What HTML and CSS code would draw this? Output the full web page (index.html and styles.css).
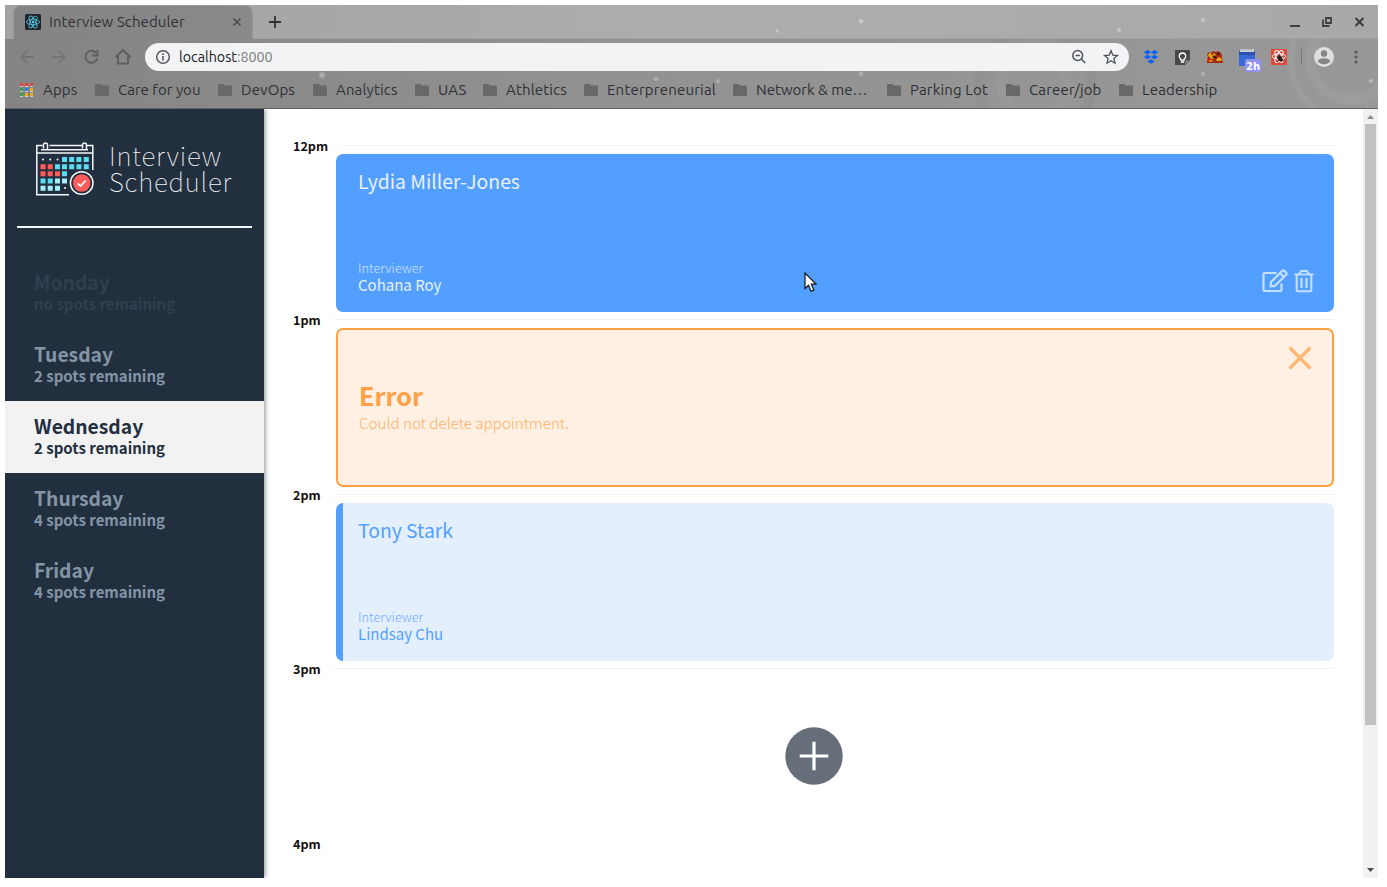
FILE: index.html
```html
<!DOCTYPE html>
<html lang="en">
<head>
<meta charset="utf-8">
<title>Interview Scheduler</title>
<link rel="stylesheet" href="styles.css">
</head>
<body>
<svg width="0" height="0" class="defs"><defs>
<symbol id="folder" viewBox="0 0 14 12"><path d="M1.3 0H5.5L7 1.6H12.7Q14 1.6 14 3V10.7Q14 12 12.7 12H1.3Q0 12 0 10.7V1.3Q0 0 1.3 0Z" fill="#686868"/></symbol>
</defs></svg>
<div class="window">
  <header class="chrome">
    <div class="tabstrip">
      <div class="tab">
        <svg class="favicon" width="16" height="16" viewBox="0 0 16 16"><rect width="16" height="16" rx="1.5" fill="#20232a"/><g fill="none" stroke="#4fb9d3" stroke-width=".9"><ellipse cx="8" cy="8" rx="6.6" ry="2.6"/><ellipse cx="8" cy="8" rx="6.6" ry="2.6" transform="rotate(60 8 8)"/><ellipse cx="8" cy="8" rx="6.6" ry="2.6" transform="rotate(120 8 8)"/></g><circle cx="8" cy="8" r="1.3" fill="#61dafb"/></svg>
        <span class="tab-title">Interview Scheduler</span>
        <svg class="tab-close" width="8" height="8" viewBox="0 0 8 8"><path d="M.5 .5L7.5 7.5M7.5 .5L.5 7.5" stroke="#4d4d4d" stroke-width="1.5"/></svg>
      </div>
      <svg class="new-tab" width="12" height="12" viewBox="0 0 12 12"><path d="M6 0V12M0 6H12" stroke="#333" stroke-width="1.8"/></svg>
      <svg class="win-controls" width="76" height="12" viewBox="0 0 76 12"><path d="M0 10H10" stroke="#3d4043" stroke-width="2"/><path d="M36 2H41V7H36ZM33 3.5V10H39.5" fill="none" stroke="#3d4043" stroke-width="1.8"/><path d="M65.5 2L73.5 10M73.5 2L65.5 10" stroke="#3d4043" stroke-width="2.2"/></svg>
    </div>
    <div class="toolbar">
      <svg class="nav" width="112" height="18" viewBox="0 0 112 18" fill="none" stroke="#747474" stroke-width="1.9"><path d="M14 9H1.5M7.5 2.7L1.3 9L7.5 15.3M32 9H44.7M38.5 2.7L44.7 9L38.5 15.3"/><g stroke="#5c5e61"><path d="M76 4.8A6 6 0 1 0 77.3 10.2M77.5 2V7.5H72"/><path d="M95.5 9.2L103 2L110.500 9.200M98 8V15.600H108V8"/></g></svg>
      <div class="address">
        <svg width="16" height="16" viewBox="0 0 16 16"><circle cx="8" cy="8" r="6.300" fill="none" stroke="#55595d" stroke-width="1.500"/><path d="M8 7V11.500M8 4.300V6" stroke="#55595d" stroke-width="1.600"/></svg>
        <span class="url">localhost<span class="port">:8000</span></span>
        <svg class="address-actions" width="48" height="16" viewBox="0 0 48 16" fill="none" stroke="#4f5357" stroke-width="1.5"><circle cx="5.700" cy="6.500" r="4.900"/><path d="M9.200 10L13.200 14M3.500 6.500H7.900"/><path d="M39 1.800L40.800 6.100L45.500 6.500L41.900 9.600L43 14.200L39 11.700L35 14.200L36.100 9.600L32.500 6.500L37.200 6.100Z" stroke-width="1.300"/></svg>
      </div>
      <div class="extensions">
        <svg width="14" height="14" viewBox="0 0 14 14" fill="#0061ff"><path d="M3.500 0L7 2.200L3.500 4.400L0 2.200ZM10.500 0L14 2.200L10.500 4.400L7 2.200ZM3.500 4.800L7 7L3.500 9.200L0 7ZM10.500 4.800L14 7L10.500 9.200L7 7ZM7 9.300L10.500 11.600L7 13.800L3.500 11.600Z"/></svg>
        <svg width="15" height="15" viewBox="0 0 15 15"><path d="M0 0H15V10L10 15H0Z" fill="#484848"/><path d="M15 10H10V15Z" fill="#747474"/><path d="M6 9.300Q4.300 8 4.300 6.200A3.200 3.200 0 0 1 10.700 6.200Q10.700 8 9 9.300V10.200H6Z" fill="none" stroke="#fff" stroke-width="1.300"/><path d="M5.800 12H9.200" stroke="#fff" stroke-width="1.600"/></svg>
        <svg width="16" height="14" viewBox="0 0 16 14"><path d="M0 4L2 2L4 3L6 1L9 2L11 1L14 3L15 5L15 9L16 13H0V10L1 7Z" fill="#9c2d10"/><path d="M1 4L4 3L5 6L7 3L9 5L8 8L5 9L2 7ZM9 9L12 7L15 9L14 11L10 11ZM0 10L4 9L6 11L3 12Z" fill="#eaa71e"/><path d="M5 7L8 5L10 9L7 8ZM10 2L13 4L11 6Z" fill="#401307"/><path d="M1 8L5 10L1 11ZM11 6L14 5L14 8Z" fill="#dd1a0c"/></svg>
        <svg class="calendar-ext" width="22" height="23" viewBox="0 0 22 23"><path d="M0 2H16V17H0Z" fill="#3a68d2"/><path d="M0 2H16V6H0Z" fill="#2a50b0"/><path d="M1 0H15V3H1Z" fill="#d0d2d5"/><path d="M3 0V2M6 0V2M9 0V2M12 0V2" stroke="#888" stroke-width=".7"/><rect x="6" y="10" width="16" height="13" rx="2" fill="#9292f4"/><text class="badge-text" x="14" y="20.500">2h</text></svg>
        <svg width="16" height="16" viewBox="0 0 16 16"><rect width="16" height="16" fill="#df4939"/><g fill="none" stroke="#fff" stroke-width="1"><ellipse cx="8" cy="7.500" rx="6.600" ry="2.600"/><ellipse cx="8" cy="7.500" rx="6.600" ry="2.600" transform="rotate(60 8 7.500)"/><ellipse cx="8" cy="7.500" rx="6.600" ry="2.600" transform="rotate(120 8 7.500)"/></g><ellipse cx="9" cy="9.500" rx="2.300" ry="3.200" transform="rotate(-35 9 9.500)" fill="#29201e"/><path d="M5.500 8L13 12M12 6.500L6 13M8 5V9" stroke="#29201e" stroke-width=".9"/></svg>
      </div>
      <span class="separator"></span>
      <svg class="avatar" width="20" height="20" viewBox="0 0 20 20"><circle cx="10" cy="10" r="10" fill="#dedede"/><circle cx="10" cy="6.500" r="3.200" fill="#858585"/><path d="M3.800 14.300Q4.500 11.200 10 11.200T16.200 14.300Q14 17.300 10 17.300T3.800 14.300Z" fill="#858585"/></svg>
      <svg class="kebab" width="4" height="14" viewBox="0 0 4 14" fill="#55585b"><circle cx="2" cy="2" r="1.600"/><circle cx="2" cy="7" r="1.600"/><circle cx="2" cy="12" r="1.600"/></svg>
    </div>
    <nav class="bookmarks">
      <a class="bookmark apps"><svg width="14" height="14" viewBox="0 0 14 14"><path d="M0 0H3V3H0ZM5 0H8V3H5ZM10 0H13V3H10Z" fill="#e93f35"/><path d="M0 5H3V8H0ZM0 10H3V13H0Z" fill="#32a152"/><path d="M5 5H8V8H5Z" fill="#267df2"/><path d="M10 5H13V8H10ZM5 10H8V13H5ZM10 10H13V13H10Z" fill="#f5a60b"/><path d="M0 3.500H3M5 3.500H8M10 3.500H13M0 8.500H3M5 8.500H8M10 8.500H13M0 13.500H3M5 13.500H8M10 13.500H13" stroke="#cfcfcf"/></svg><span>Apps</span></a>
      <a class="bookmark care"><svg width="14" height="12"><use href="#folder"/></svg><span>Care for you</span></a>
      <a class="bookmark devops"><svg width="14" height="12"><use href="#folder"/></svg><span>DevOps</span></a>
      <a class="bookmark analytics"><svg width="14" height="12"><use href="#folder"/></svg><span>Analytics</span></a>
      <a class="bookmark uas"><svg width="14" height="12"><use href="#folder"/></svg><span>UAS</span></a>
      <a class="bookmark athletics"><svg width="14" height="12"><use href="#folder"/></svg><span>Athletics</span></a>
      <a class="bookmark enterprise"><svg width="14" height="12"><use href="#folder"/></svg><span>Enterpreneurial</span></a>
      <a class="bookmark network"><svg width="14" height="12"><use href="#folder"/></svg><span>Network &amp; me…</span></a>
      <a class="bookmark parking"><svg width="14" height="12"><use href="#folder"/></svg><span>Parking Lot</span></a>
      <a class="bookmark career"><svg width="14" height="12"><use href="#folder"/></svg><span>Career/job</span></a>
      <a class="bookmark leadership"><svg width="14" height="12"><use href="#folder"/></svg><span>Leadership</span></a>
    </nav>
  </header>
  <div class="page">
    <aside class="sidebar">
      <div class="logo">
        <svg width="60" height="56" viewBox="0 0 60 56">
          <g fill="none" stroke="#f5f8fa" stroke-width="1.500"><path d="M7.500 4.500H1.800V53.800H34M2 12H58M50.500 4.500H57.800V29M14.500 4.500H48M6 8.800H53M8.500 7.500V4A2 2 0 0 1 12.500 4V8M47.500 7.500V4A2 2 0 0 1 51.500 4V8"/><circle cx="46.700" cy="42" r="11.300"/></g>
          <g fill="#5bdcf0"><path d="M27 16H32V21H27ZM34.200 16H39.200V21H34.200ZM41.400 16H46.400V21H41.400ZM48.800 16H53.800V21H48.800ZM20 23.200H25V28.200H20ZM27 23.200H32V28.200H27ZM34.200 23.200H39.200V28.200H34.200ZM41.400 23.200H46.400V28.200H41.400ZM48.800 23.200H53.800V28.200H48.800ZM27 30.200H32V35.200H27ZM5.500 37.500H10.500V42.500H5.500ZM12.700 37.500H17.700V42.500H12.700Z"/></g>
          <path d="M5.500 23.200H10.500V28.200H5.500ZM12.700 23.200H17.700V28.200H12.700ZM5.500 30.200H10.500V35.200H5.500ZM12.700 30.200H17.700V35.200H12.700ZM20 30.200H25V35.200H20Z" fill="#ff5b5b"/>
          <path d="M20 37.500H25V42.500H20ZM27 37.500H32V42.500H27ZM5.500 44.700H10.500V49.700H5.500ZM12.700 44.700H17.700V49.700H12.700ZM20 44.700H25V49.700H20Z" fill="#a5eefa"/>
          <g fill="#f5f8fa"><circle cx="8" cy="18.500" r="1"/><circle cx="15.200" cy="18.500" r="1"/><circle cx="22.500" cy="18.500" r="1"/><circle cx="30" cy="47" r="1"/></g>
          <circle cx="46.700" cy="42" r="8.700" fill="#ff5b5b"/><path d="M42.700 42.300L45.500 45L50.700 39.600" fill="none" stroke="#fff" stroke-width="1.700"/>
        </svg>
        <div class="logo-text"><span class="logo-one">Interview</span><span class="logo-two">Scheduler</span></div>
      </div>
      <hr class="divider">
      <ul class="days">
        <li class="day full"><h2>Monday</h2><h3 class="none">no spots remaining</h3></li>
        <li class="day"><h2>Tuesday</h2><h3>2 spots remaining</h3></li>
        <li class="day selected"><h2>Wednesday</h2><h3>2 spots remaining</h3></li>
        <li class="day"><h2>Thursday</h2><h3>4 spots remaining</h3></li>
        <li class="day"><h2>Friday</h2><h3>4 spots remaining</h3></li>
      </ul>
    </aside>
    <main class="schedule">
      <section class="slot">
        <div class="hour"><h4>12pm</h4><i></i></div>
        <article class="card hover">
          <h2 class="student">Lydia Miller-Jones</h2>
          <div class="card-foot">
            <div><h4 class="role">Interviewer</h4><h3 class="person">Cohana Roy</h3></div>
            <div class="actions">
              <svg width="26" height="24" viewBox="0 0 26 24" fill="none" stroke="#c6dfff" stroke-width="2.200" stroke-linejoin="round"><path d="M14.500 4H2.500Q1.500 4 1.500 5V21Q1.500 22 2.500 22H18.500Q19.500 22 19.500 21V14.500"/><path d="M8.500 17.300L9 13L20.300 1.800Q21.300 1 22.300 1.800L24.200 3.700Q25 4.700 24.200 5.700L13 16.800ZM18 4.200L21.800 8"/></svg>
              <svg width="20" height="24" viewBox="0 0 20 24" fill="none" stroke="#c6dfff" stroke-width="2.100"><path d="M.6 5.500H19.400M2.700 5.500V21Q2.700 22.300 4 22.300H16Q17.300 22.300 17.300 21V5.500M5 5L7 2H13L15 5M7.500 9V19M12.500 9V19"/></svg>
            </div>
          </div>
        </article>
      </section>
      <section class="slot">
        <div class="hour"><h4>1pm</h4><i></i></div>
        <article class="card error">
          <div class="error-text"><h1>Error</h1><p>Could not delete appointment.</p></div>
          <svg width="24" height="24" viewBox="0 0 24 24"><path d="M2.500 2.500L21.500 21.500M21.500 2.500L2.500 21.500" stroke="#ffb572" stroke-width="3.200" stroke-linecap="round"/></svg>
        </article>
      </section>
      <section class="slot">
        <div class="hour"><h4>2pm</h4><i></i></div>
        <article class="card show">
          <h2 class="student">Tony Stark</h2>
          <div class="card-foot"><div><h4 class="role">Interviewer</h4><h3 class="person">Lindsay Chu</h3></div></div>
        </article>
      </section>
      <section class="slot">
        <div class="hour"><h4>3pm</h4><i></i></div>
        <article class="card add"><svg width="58" height="58" viewBox="0 0 58 58"><circle cx="29" cy="29" r="28.700" fill="#666e79"/><path d="M29 14.700V43.300M14.700 29H43.300" stroke="#fff" stroke-width="3.200"/></svg></article>
      </section>
      <section class="slot last"><div class="hour"><h4>4pm</h4></div></section>
    </main>
    <div class="scrollbar">
      <svg width="7" height="4" viewBox="0 0 7 4"><path d="M0 4L3.500 0L7 4Z" fill="#8d8d8d"/></svg>
      <span class="thumb"></span>
      <svg class="down" width="7" height="4" viewBox="0 0 7 4"><path d="M0 0H7L3.500 4Z" fill="#4c4c4c"/></svg>
    </div>
  </div>
  <svg class="cursor" width="13" height="21" viewBox="0 0 13 21"><path d="M1 1V16.500L4.500 13.200L7 19.300L9.800 18.100L7.300 12.200H12Z" fill="#fff" stroke="#111" stroke-width="1.200"/></svg>
</div>
</body>
</html>
```
FILE: styles.css
```css
* { box-sizing: border-box; }
body { margin: 0; padding: 5px; width: 1387px; height: 887px; overflow: hidden; background: #fff; font-family: "Source Sans Pro", "Noto Sans CJK SC", "Open Sans", sans-serif; }
.defs { position: absolute; }
h1, h2, h3, h4, p, ul { margin: 0; padding: 0; }
svg { flex: none; display: block; }
.window { position: relative; width: 1373px; height: 873px; display: flex; flex-direction: column; }

/* browser frame */
.chrome { height: 104px; flex: none; border-bottom: 1px solid #656062; color: #2e3033; font-family: Ubuntu, "Noto Sans", sans-serif;
  background:
    radial-gradient(circle at 317px 70px, #b4b4b4 0 1px, transparent 4px),
    radial-gradient(circle at 651px 74px, #b0b0b0 0 1px, transparent 3px),
    radial-gradient(circle at 713px 76px, #acacac 0 1px, transparent 3px),
    radial-gradient(circle at 856px 69px, #b4b4b4 0 1px, transparent 3px),
    radial-gradient(circle at 1198px 69px, #b4b4b4 0 1px, transparent 3px),
    radial-gradient(circle at 1366px 76px, #b8b8b8 0 1px, transparent 3px),
    radial-gradient(circle at 1346px 55px, transparent 0 34px, #a2a2a277 36px 44px, transparent 46px 56px, #a2a2a277 58px 62px, transparent 64px),
    radial-gradient(circle at 1030px 80px, transparent 0 26px, #9c9c9c66 28px 38px, transparent 40px 50px, #85858444 52px 60px, transparent 62px),
    linear-gradient(90deg, #858484, #929292 45%, #989898); }
.tabstrip { height: 34px; display: flex; align-items: center; padding: 0 12px 0 8px; border-bottom: 1px solid #a1a1a1;
  background:
    radial-gradient(circle at 856px 16px, #d0d0d0 0 1px, transparent 3px),
    radial-gradient(circle at 772px 26px, #c8c8c8 0 1px, transparent 2px),
    radial-gradient(circle at 1114px 25px, #c8c8c8 0 1px, transparent 3px),
    radial-gradient(circle at 1198px 15px, #c8c8c8 0 1px, transparent 3px),
    linear-gradient(90deg, #a3a2a2, #adadad 50%, #a9a9a9); }
.tab { width: 240px; height: 34px; display: flex; align-items: center; padding: 0 11px 0 11px; border-radius: 8px 8px 0 0; border: 1px solid #979797; border-bottom: 0; background: linear-gradient(90deg, #858484, #8a8989); }
.tab-title { margin-left: 8px; font-size: 15px; letter-spacing: .1px; line-height: 18px; white-space: nowrap; }
.tab-close { margin-left: auto; }
.new-tab { margin-left: 16px; }
.win-controls { margin-left: auto; }
.toolbar { height: 36px; display: flex; align-items: center; padding: 0 20px 0 15px; }
.address { width: 984px; height: 28px; margin-left: 13px; padding: 0 9px 0 10px; border-radius: 14px; background: #f1f3f5; display: flex; align-items: center; }
.url { margin-left: 8px; color: #202124; font-size: 14.250px; line-height: 18px; }
.port { color: #777b80; }
.address-actions { margin-left: auto; }
.extensions { display: flex; align-items: center; gap: 17px; margin-left: 15px; }
.calendar-ext { margin: 7px -7px 0 -1px; }
.badge-text { fill: #fff; font: bold 10px "DejaVu Sans", sans-serif; text-anchor: middle; }
.separator { width: 1px; height: 16px; margin-left: 14px; background: #777; }
.avatar { margin-left: 12px; }
.kebab { margin-left: auto; }
.bookmarks { display: flex; height: 29px; padding-left: 15px; align-items: center; }
.bookmark { display: flex; align-items: center; gap: 9px; white-space: nowrap; font-size: 15px; letter-spacing: .15px; flex: none; }
.bookmark span { line-height: 20px; }
.apps { width: 75px; } .care { width: 123px; letter-spacing: 0; } .devops { width: 95px; } .analytics { width: 102px; } .uas { width: 68px; }
.athletics { width: 101px; } .enterprise { width: 149px; letter-spacing: .2px; } .network { width: 154px; letter-spacing: 0; } .parking { width: 119px; } .career { width: 113px; }

/* application */
.page { flex: 1; min-height: 0; display: flex; }
.sidebar { width: 259px; flex: none; background: #222f3e; box-shadow: 1px 0 5px rgba(34,47,62,.55); clip-path: inset(0 -10px 0 0); }
.logo { height: 117px; padding: 32px 0 0 30px; display: flex; gap: 14px; color: #f0f3f6; }
.logo-text { display: flex; flex-direction: column; padding-top: 1px; }
.logo-text span { font-size: 26px; font-weight: 100; line-height: 26px; letter-spacing: .8px; }
.divider { width: 235px; height: 2px; margin: 0 12px 29px; border: 0; background: #f5f8fa; }
.days { list-style: none; }
.day { height: 72px; padding: 14px 29px 0; color: #8395a7; }
.day.full { color: #323f4e; }
.day.selected { color: #222f3e; background: #f2f2f2; }
.day h2 { font-size: 19.300px; line-height: 22px; font-weight: 700; }
.day h3 { font-size: 15px; line-height: 22px; font-weight: 700; }
.schedule { flex: 1; min-width: 0; padding: 28.600px 29px 0; overflow: hidden; }
.slot { height: 174.400px; display: flex; flex-direction: column; }
.hour { height: 16.400px; flex: none; display: flex; align-items: center; gap: 14px; }
.hour h4 { font-size: 12.600px; line-height: 16px; padding-top: .500px; font-weight: 700; color: #111; }
.hour i { flex: 1; height: 1px; background: #f0f0f0; margin-bottom: 1px; }
.card { height: 158px; margin-left: 43px; border-radius: 7px; display: flex; }
.hover, .show { flex-direction: column; justify-content: space-between; padding: 15px 20px 19px 15px; border-left: 7px solid #539fff; }
.hover { background: #539fff; color: #e8f1fc; }
.show { background: #e4effe; color: #539fff; }
.student { font-size: 19.350px; font-weight: 400; line-height: 25px; }
.card-foot { display: flex; justify-content: space-between; align-items: flex-end; }
.role { font-size: 12.800px; font-weight: 300; line-height: 17px; opacity: .8; }
.person { font-size: 15px; font-weight: 400; line-height: 17px; }
.actions { display: flex; gap: 6px; }
.error { height: 159px; flex: none; border: 2px solid #ffa044; background: #fff0e3; color: #ffa044; justify-content: space-between; padding: 16px 20px 0 21px; }
.error-text { padding-top: 33px; }
.error h1 { font-size: 25.200px; line-height: 32px; font-weight: 700; }
.error p { font-size: 15.150px; line-height: 21px; padding-top: 1px; font-weight: 300; opacity: .8; }
.add { justify-content: center; align-items: center; margin-right: 43px; }
.scrollbar { width: 15px; flex: none; background: #f1f1f1; display: flex; flex-direction: column; align-items: center; padding: 6px 0; }
.thumb { width: 11px; height: 601px; margin-top: 5px; background: #c1c1c1; }
.down { margin-top: auto; }
.cursor { position: absolute; left: 799px; top: 267px; }
```
